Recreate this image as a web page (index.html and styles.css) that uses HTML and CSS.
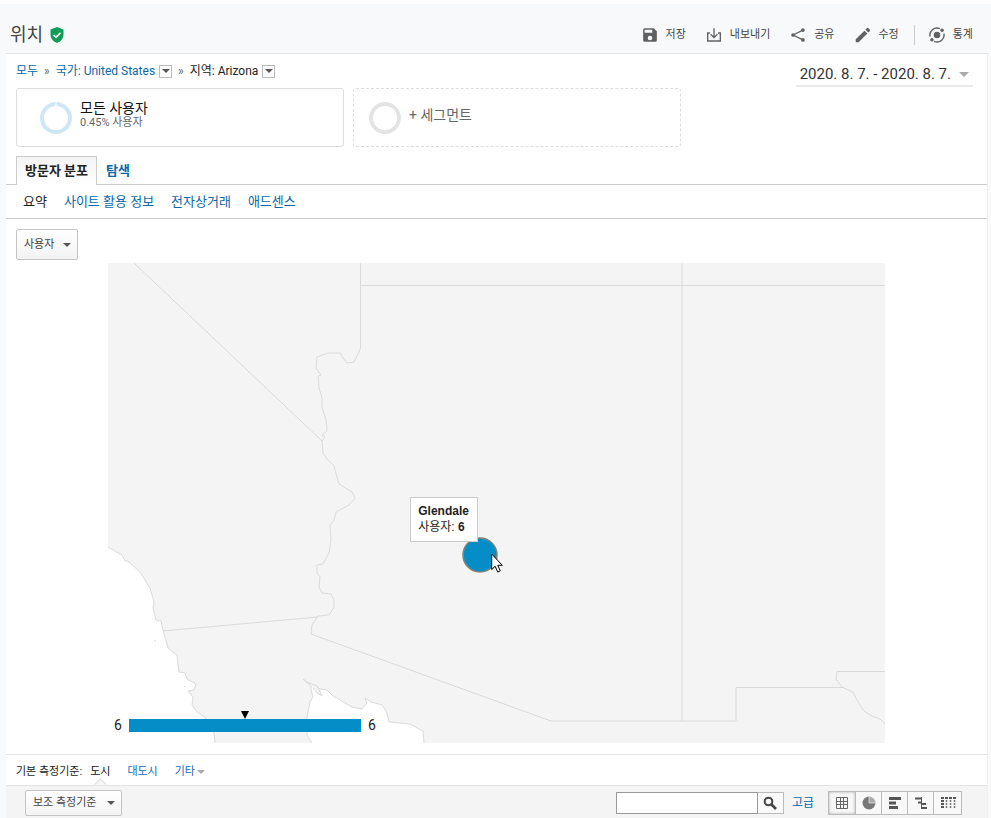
FILE: index.html
```html
<!DOCTYPE html>
<html lang="ko">
<head>
<meta charset="utf-8">
<meta name="viewport" content="width=device-width, initial-scale=1">
<title>위치</title>
<link rel="stylesheet" href="styles.css">
</head>
<body>
<header class="topbar">
  <h1 class="title">위치</h1>
  <svg class="shield" viewBox="0 0 14 16" aria-hidden="true"><path d="M7 0 .5 2.6v5C.5 11.500 3.200 14.800 7 16c3.800-1.200 6.500-4.500 6.500-8.400v-5z" fill="#0f9d58"/><path d="m3.600 8 2.400 2.400 4.500-4.700" fill="none" stroke="#fff" stroke-width="1.600"/></svg>
  <nav class="actions">
    <button class="action"><svg viewBox="1.5 1.5 21 21"><path d="M17 3H5a2 2 0 0 0-2 2v14a2 2 0 0 0 2 2h14a2 2 0 0 0 2-2V7zm-5 16a3 3 0 1 1 0-6 3 3 0 0 1 0 6zm3-10H5V5h10z"/></svg>저장</button>
    <button class="action"><svg viewBox="0 0 24 24" class="line"><path d="M12 2v14M7 11l5 5 5-5M6 9H2.500v12h19V9H18"/></svg>내보내기</button>
    <button class="action"><svg viewBox="-1 -1 26 26"><path d="M20 4 4 12l16 8" fill="none" stroke="#616161" stroke-width="2"/><circle cx="20" cy="4" r="3"/><circle cx="4" cy="12" r="3"/><circle cx="20" cy="20" r="3"/></svg>공유</button>
    <button class="action"><svg viewBox="1 1 22 22"><path d="M2 18v4h4L18 10l-4-4zM21.500 6.500a1.200 1.200 0 0 0 0-1.600l-2.400-2.400a1.200 1.200 0 0 0-1.600 0L15.300 4.700l4 4z"/></svg>수정</button>
    <button class="action insights"><svg viewBox="1 1 22 22"><circle cx="12" cy="12" r="4.500"/><path d="M2.500 14A9.700 9.700 0 0 1 16 3.200M21.500 10A9.700 9.700 0 0 1 8 20.800" fill="none" stroke="#616161" stroke-width="2"/><circle cx="19" cy="5.500" r="2.400"/><circle cx="5" cy="18.500" r="2.400"/></svg>통계</button>
  </nav>
</header>

<main class="panel">
  <div class="summary">
    <div class="summary-main">
      <nav class="crumbs">
        <a href="#">모두</a><span class="sep">»</span><a href="#">국가: United States</a><button class="crumb-menu" aria-label="국가 선택"></button><span class="sep">»</span><span>지역: Arizona</span><button class="crumb-menu" aria-label="지역 선택"></button>
      </nav>
      <div class="segments">
        <button class="segment">
          <svg class="ring" viewBox="0 0 32 32"><circle cx="16" cy="16" r="14" fill="none" stroke="#cfe7f5" stroke-width="4"/><path d="M16 0v4" stroke="#fff"/></svg>
          <span class="segment-text"><span class="segment-name">모든 사용자</span><span class="segment-share">0.45% 사용자</span></span>
        </button>
        <button class="segment segment-add">
          <svg class="ring" viewBox="0 0 32 32"><circle cx="16" cy="16" r="14" fill="none" stroke="#e4e4e4" stroke-width="4"/></svg>
          <span class="segment-text">+ 세그먼트</span>
        </button>
      </div>
    </div>
    <button class="dates">2020. 8. 7. - 2020. 8. 7.</button>
  </div>

  <nav class="tabs"><a class="tab tab-on" href="#">방문자 분포</a><a class="tab" href="#">탐색</a></nav>
  <nav class="subtabs"><a class="current" href="#">요약</a><a href="#">사이트 활용 정보</a><a href="#">전자상거래</a><a href="#">애드센스</a></nav>

  <section class="map-section">
    <label class="drop"><select class="metric" aria-label="측정항목"><option>사용자</option></select></label>
    <div class="map">
      <svg class="land" viewBox="108 263 777 480" aria-hidden="true">
        <path fill="#f4f4f4" d="M108 263H885V743H424L423 731 410 724 389 722 387 713 382 705 371 702 365 698 367 703 362 709 352 707 333 696 327 690 320 689 322 696 317 693 313 688 311 686 311 690 313 697 310 702 307 717 307 735 312 743H215L214 733 205 717 197 712 192 705 193 697 188 691 194 690 196 684 187 679 185 673 179 672 177 655 168 648 163 630 161 621 156 620 153 608 154 602 150 588 140 572 128 561 125 561 122 555 108 547z"/>
        <g fill="none" stroke="#dadada">
          <path d="M108 547 122 555 125 561 128 561 140 572 150 588 154 602 153 608 156 620 161 621 163 630 168 648 177 655 179 672 185 673 187 679 196 684 194 690 188 691 193 697 192 705 197 712 205 717 214 733 215 743M312 743 307 735 307 717 310 702 313 697 311 690 311 686 303 679 307 682 317 686 322 696 317 693 313 688M317 686 320 689 327 690 333 696 352 707 362 709 367 703 365 698 371 702 382 705 387 713 389 722 410 724 423 731 424 743M155 640v2M185 686v1"/>
          <path d="M134 263 322 441M360.500 263V348L358 354 354 362 347 363 343 358 340 353 328 353 317 357 316 368 321 375 318 376 319 388 322 398 322 407 326 420 327 431 322 435 325 437 322 441 323 453 327 459 334 466 337 477 339 484 352 492 355 498 349 505 336 512 334 520 330 525 331 540 329 553 323 564 317 565 317 573 320 577 319 587 322 593 331 594 334 600 334 607 329 615 318 616 312 625 311 634 551 721H736V687.500H843M163 631 318 617M360.500 285.500H885M682 263V721"/>
          <path d="M885 671.500H837L836 679 842 687 853 692 858 702 864 711 872 716 880 719 885 724"/>
        </g>
        <circle cx="480" cy="555" r="17" fill="#058dc7" stroke="#83847c" stroke-width="1.500"/>
      </svg>
      <div class="scale"><span>6</span><span class="bar"></span><span>6</span></div>
      <div class="tip"><b>Glendale</b><br>사용자: <b>6</b></div>
      <svg class="cursor" viewBox="0 0 12 20" aria-hidden="true"><path d="M.7 1v15.500l3.500-3.200 2.500 5.700 2.600-1.100-2.500-5.600h4.500z" fill="#fff" stroke="#000"/></svg>
    </div>
  </section>

  <nav class="dimensions">
    <span>기본 측정기준:</span><a class="current" href="#">도시</a><a href="#">대도시</a><a class="more" href="#">기타</a>
  </nav>
  <div class="tools">
    <label class="drop"><select class="secondary" aria-label="보조 측정기준"><option>보조 측정기준</option></select></label>
    <form class="search">
      <input type="text" aria-label="검색"><button type="button" aria-label="검색"><svg viewBox="0 0 14 14"><circle cx="5.500" cy="5.500" r="3.800" fill="none" stroke="#444" stroke-width="2"/><path d="m8.500 8.500 4.500 4.500" stroke="#444" stroke-width="2.600"/></svg></button>
    </form>
    <a class="advanced" href="#">고급</a>
    <div class="views">
      <button class="on" aria-label="표"><svg viewBox="0 0 14 14"><path d="M1.500 1.500h11v11h-11zM1.500 5.500h11M1.500 8.500h11M5.500 1.500v11M8.500 1.500v11" fill="none" stroke="#666"/></svg></button>
      <button aria-label="비율"><svg viewBox="0 0 14 14"><circle cx="7" cy="7" r="6.500" fill="#777"/><path d="M7 7V.5A6.500 6.500 0 0 1 13.500 7z" fill="#aaa" stroke="#eee" stroke-width=".7"/></svg></button>
      <button aria-label="실적"><svg viewBox="0 0 14 14"><path d="M1 1h12v3H1zM1 5.500h7v3H1zM1 10h9v3H1z" fill="#555"/></svg></button>
      <button aria-label="비교"><svg viewBox="0 0 14 14"><path d="M1 2.500h6M4 6.500h4M7 8h5M8 12h5" stroke="#555" stroke-width="2"/><path d="M7.500 1v12" stroke="#555"/></svg></button>
      <button aria-label="피봇"><svg viewBox="0 0 16 14"><path d="M1 2h3M5 2h3M9 2h3M13 2h3" stroke="#555" stroke-width="2"/><path d="M2.500 4v9" stroke="#555" stroke-width="3" stroke-dasharray="2 1"/><path d="M6.500 4v9M10.500 4v9M14.500 4v9" stroke="#777" stroke-width="1.500" stroke-dasharray="2 1"/></svg></button>
    </div>
  </div>
</main>
</body>
</html>
```
FILE: styles.css
```css
* { box-sizing: border-box; }

body {
  margin: 0;
  padding: 4px 3px 0 6px;
  background: linear-gradient(#fff 4px, #f8f9fa 4px);
  color: #222;
  font: 12px/16px Roboto, "Noto Sans CJK KR", sans-serif;
}

button, select, input { font: inherit; color: inherit; margin: 0; }
button { padding: 0; border: 0; background: none; cursor: pointer; }
a { color: #0b67a8; text-decoration: none; }

.topbar {
  display: flex;
  align-items: center;
  height: 50px;
  padding: 12px 15px 0 4px;
  border-bottom: 1px solid #e2e4e5;
}
.title { margin: 0; font-size: 18px; line-height: 24px; font-weight: 400; color: #444; }
.shield { width: 14px; height: 16px; margin-left: 7px; }
.actions { display: flex; align-items: center; gap: 20px; margin-left: auto; }
.action { display: flex; align-items: center; gap: 8px; font-size: 11px; color: #444; }
.action svg { width: 16px; height: 16px; fill: #616161; }
.action svg.line { fill: none; stroke: #616161; stroke-width: 2; }
.insights { padding-left: 14px; border-left: 1px solid #ccc; line-height: 20px; margin-left: -5px; }

.panel { background: #fff; border-right: 1px solid #f0f0f0; }

.summary { display: flex; justify-content: space-between; align-items: flex-start; padding: 9px 14px 9px 10px; }
.summary-main { flex: 0 1 665px; }
.crumbs { display: flex; align-items: center; height: 16px; margin-bottom: 9px; }
.sep { margin: 0 6px; color: #666; }
.crumb-menu {
  display: flex;
  align-items: center;
  justify-content: center;
  width: 13px;
  height: 13px;
  margin-left: 4px;
  border: 1px solid #bbb;
  background: #fff;
}
.crumb-menu::after, .dates::after, .drop::after, .more::after {
  content: "";
  display: block;
  border: 4px solid transparent;
  border-top-color: #555;
  border-bottom: 0;
}

.segments { display: grid; grid-template-columns: 1fr 1fr; gap: 9px; }
.segment {
  display: flex;
  align-items: center;
  gap: 8px;
  height: 59px;
  padding: 0 23px;
  border: 1px solid #ddd;
  border-radius: 3px;
  text-align: left;
}
.ring { width: 32px; height: 32px; }
.segment-text { padding-bottom: 6px; }
.segment-name, .segment-share { display: block; }
.segment-name { font-size: 14px; line-height: 16px; color: #111; }
.segment-share { font-size: 11px; line-height: 14px; color: #666; }
.segment-add { border-style: dashed; padding: 0 15px; font-size: 14px; color: #666; }

.dates {
  display: flex;
  align-items: center;
  gap: 8px;
  height: 24px;
  padding: 0 4px;
  border-bottom: 2px solid #eaeaea;
  font-size: 15px;
  color: #333;
}
.dates::after { border-width: 5px 5px 0; border-top-color: #aaa; }

.tabs { display: flex; height: 29px; padding-left: 10px; border-bottom: 1px solid #ccc; }
.tab { height: 29px; padding: 0 8px; border: 1px solid transparent; font-size: 13px; line-height: 28px; font-weight: 700; }
.tab-on { border-color: #ccc; border-bottom: 0; background: linear-gradient(#f4f4f4, #fff); color: #222; }
.subtabs { display: flex; gap: 17px; height: 34px; padding-left: 17px; border-bottom: 1px solid #ccc; font-size: 13px; line-height: 34px; }
.current { color: #222; }

.map-section { padding: 10px 10px 11px; }
.drop { position: relative; display: inline-flex; vertical-align: top; }
.drop::after { position: absolute; right: 7px; top: 50%; margin-top: -2px; pointer-events: none; }
.drop select {
  appearance: none;
  border: 1px solid #c4c4c4;
  border-radius: 2px;
  background: linear-gradient(#fff, #f3f3f3);
  font-size: 11px;
  color: #444;
}
.metric { height: 31px; padding: 0 22px 0 7px; }
.map { position: relative; max-width: 777px; margin: 3px auto 0; }
.land { display: block; width: 100%; }
.scale {
  position: absolute;
  left: 6px;
  bottom: 10px;
  display: flex;
  align-items: center;
  gap: 7px;
  font-size: 14px;
}
.bar { position: relative; width: 232px; height: 13px; background: #058dc7; }
.bar::before {
  content: "";
  position: absolute;
  left: 50%;
  bottom: 100%;
  margin-left: -4px;
  border: 4px solid transparent;
  border-top: 8px solid #000;
  border-bottom: 0;
}
.tip {
  position: absolute;
  left: 38.9%;
  top: 48.7%;
  padding: 5px 8px 6px 7px;
  border: 1px solid #ccc;
  background: #fff;
  font-family: "Liberation Sans", "Noto Sans CJK KR", sans-serif;
  white-space: nowrap;
}
.cursor { position: absolute; left: 49.3%; top: 60.4%; width: 12px; height: 20px; }

.dimensions {
  display: flex;
  align-items: center;
  gap: 17px;
  height: 32px;
  padding: 4px 10px 0;
  border: 1px solid #e4e4e4;
  border-width: 1px 0;
  font-size: 11px;
}
.dimensions a { color: #1967c0; }
.dimensions span { margin-right: -9px; }
.dimensions .current { position: relative; color: #111; }
.dimensions .current::after {
  content: "";
  position: absolute;
  left: 50%;
  bottom: -9px;
  width: 8px;
  height: 8px;
  margin-left: -4px;
  border: 1px solid #ddd;
  border-width: 1px 0 0 1px;
  background: #f4f4f4;
  transform: rotate(45deg);
  clip-path: polygon(-10% -10%, 110% -10%, -10% 110%);
}
.more { display: flex; align-items: center; gap: 2px; }
.dimensions .more::after { border-top-color: #aaa; }

.tools { display: flex; align-items: center; height: 32px; padding: 2px 25px 0 19px; background: #f4f4f4; }
.secondary { height: 26px; padding: 0 24px 0 7px; }
.search { display: flex; margin: 0 8px 0 auto; }
.search input { width: 142px; height: 22px; padding: 0 4px; border: 1px solid #999; background: #fff; }
.search button { display: flex; align-items: center; justify-content: center; width: 26px; border: 1px solid #bbb; border-left: 0; background: #fafafa; }
.search svg { width: 14px; height: 14px; }
.advanced { margin-right: 14px; }
.views { display: flex; border: 1px solid #bbb; background: #f8f8f8; }
.views button { display: flex; align-items: center; justify-content: center; width: 26px; height: 22px; border-left: 1px solid #bbb; }
.views button:first-child { border-left: 0; }
.views button:last-child { width: 28px; }
.views .on { box-shadow: inset 0 0 3px #aaa; }
.views svg { width: 14px; height: 14px; }
.views button:last-child svg { width: 16px; }
```
